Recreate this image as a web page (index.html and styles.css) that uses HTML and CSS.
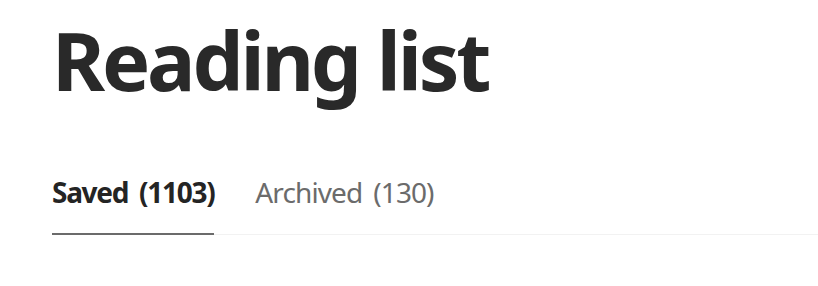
FILE: index.html
```html
<!DOCTYPE html>
<html lang="en">
<head>
<meta charset="utf-8">
<title>Reading list</title>
<link rel="stylesheet" href="styles.css">
</head>
<body>
<main class="page">
  <h1 class="title">Reading list</h1>
  <nav class="tabs">
    <a class="tab tab-active" href="#"><span class="tab-label">Saved</span><span class="tab-count">(1103)</span></a>
    <a class="tab" href="#"><span class="tab-label">Archived</span><span class="tab-count">(130)</span></a>
  </nav>
</main>
</body>
</html>
```

FILE: styles.css
```css
html, body {
  margin: 0;
  padding: 0;
  background: #ffffff;
}

body {
  font-family: "Noto Sans", "Open Sans", sans-serif;
  color: #242424;
}

.page {
  padding: 19px 0 0 52px;
}

.title {
  margin: 0;
  font-size: 81px;
  line-height: 81px;
  font-weight: 700;
  color: #292929;
  letter-spacing: -3.2px;
}

.tabs {
  margin-top: 78px;
  display: flex;
  gap: 41px;
  border-bottom: 1px solid #f2f2f2;
}

.tab {
  display: flex;
  gap: 11px;
  padding-bottom: 27px;
  margin-bottom: -1px;
  border-bottom: 2px solid transparent;
  font-size: 28px;
  line-height: 28px;
  letter-spacing: -0.9px;
  color: #6b6b6b;
  text-decoration: none;
}

.tab-active {
  font-weight: 700;
  letter-spacing: -1.3px;
  color: #242424;
  border-bottom-color: #6b6b6b;
}
```
